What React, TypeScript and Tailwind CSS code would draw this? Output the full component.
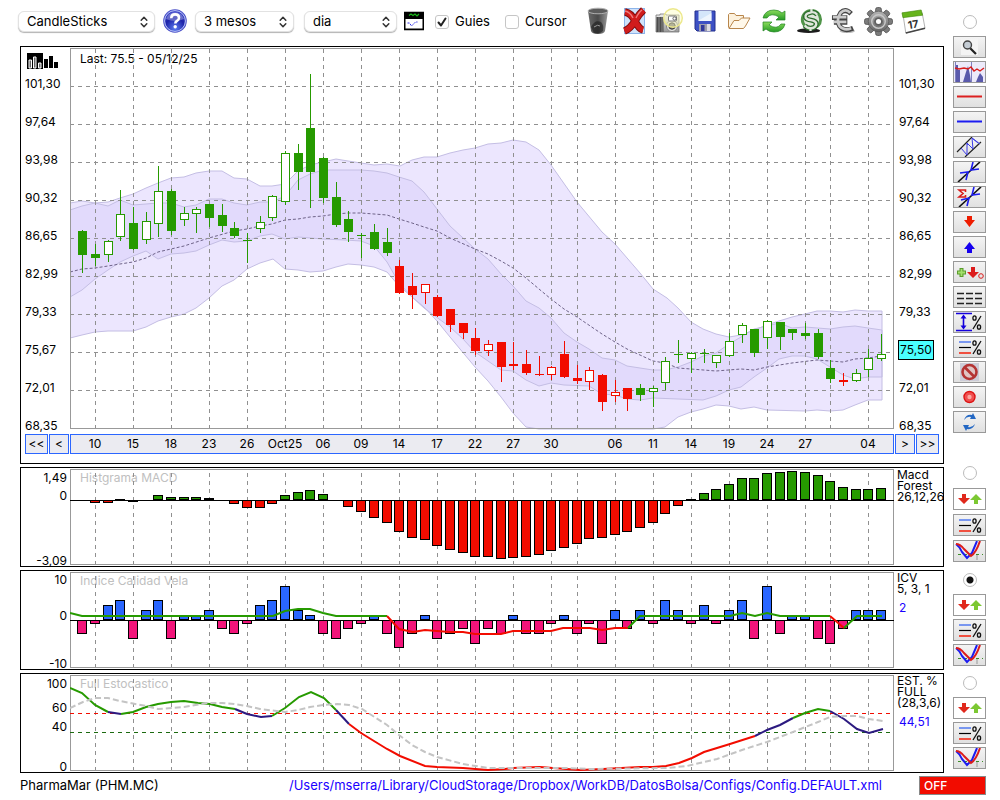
import {ReactNode, useState} from "react";

const GREEN = "#269a00";
const RED = "#f20c00";
const PURPLE = "#2c1a80";

// x of the bar number k
const barX = (k: number) => Math.floor(70 + k * 12.68);

const guides = [2, 5, 8, 11, 14, 17, 20, 23, 26, 29, 32, 35, 38, 40, 43, 46, 49, 52, 55, 58, 60, 63];

const dates: [number, string][] = [
  [2, "10"], [5, "15"], [8, "18"], [11, "23"], [14, "26"], [17, "Oct25"], [20, "06"], [23, "09"], [26, "14"], [29, "17"],
  [32, "22"], [35, "27"], [38, "30"], [43, "06"], [46, "11"], [49, "14"], [52, "19"], [55, "24"], [58, "27"], [63, "04"],
];

const prices = ["101,30", "97,64", "93,98", "90,32", "86,65", "82,99", "79,33", "75,67", "72,01", "68,35"];

// wick top, body top, body bottom, wick bottom, kind: g/r filled, G/R hollow
const candles: [number, number, number, number, string][] = [
  [230, 231, 255, 273, "g"], [244, 254, 258, 266, "g"], [240, 241, 255, 262, "G"], [190, 214, 237, 241, "G"],
  [207, 223, 249, 250, "g"], [212, 221, 240, 244, "G"], [166, 191, 224, 237, "G"], [189, 191, 231, 235, "g"],
  [207, 213, 220, 226, "G"], [207, 209, 214, 233, "G"], [204, 204, 218, 227, "g"], [204, 215, 226, 232, "g"],
  [222, 228, 236, 238, "g"], [233, 240, 241, 263, "g"], [216, 222, 229, 233, "G"], [195, 196, 218, 221, "G"],
  [151, 153, 202, 205, "G"], [144, 153, 172, 190, "g"], [74, 128, 172, 208, "g"], [157, 158, 198, 203, "g"],
  [182, 197, 225, 227, "g"], [211, 219, 232, 242, "g"], [233, 235, 236, 258, "g"], [224, 232, 249, 250, "g"],
  [228, 242, 253, 256, "g"], [260, 266, 293, 294, "r"], [273, 286, 295, 309, "r"], [284, 284, 293, 304, "R"],
  [295, 297, 316, 317, "r"], [309, 309, 325, 332, "r"], [323, 323, 333, 339, "r"], [328, 338, 351, 355, "r"],
  [340, 344, 351, 356, "R"], [342, 342, 367, 382, "r"], [342, 364, 366, 370, "r"], [350, 364, 373, 375, "r"],
  [356, 374, 375, 376, "r"], [366, 367, 375, 380, "R"], [341, 354, 377, 378, "r"], [365, 378, 381, 384, "r"],
  [367, 370, 382, 390, "R"], [374, 375, 402, 411, "r"], [380, 392, 396, 402, "R"], [388, 388, 399, 411, "r"],
  [384, 388, 395, 401, "g"], [386, 388, 392, 407, "G"], [357, 361, 383, 390, "G"], [340, 354, 355, 363, "g"],
  [352, 353, 359, 373, "G"], [349, 353, 354, 363, "g"], [355, 355, 363, 368, "G"], [333, 341, 356, 357, "G"],
  [323, 325, 335, 343, "G"], [329, 329, 353, 357, "g"], [320, 321, 338, 349, "G"], [322, 322, 337, 350, "g"],
  [329, 329, 333, 340, "g"], [323, 333, 336, 339, "g"], [329, 333, 357, 359, "g"], [360, 368, 379, 383, "g"],
  [373, 380, 382, 386, "r"], [369, 373, 381, 382, "G"], [349, 358, 370, 377, "G"], [334, 354, 359, 361, "G"],
];

const longUpper = "70,210 82,206 95,203 108,202 120,198 133,194 146,188 158,183 171,178 184,177 196,173 209,171 222,171 234,178 247,179 260,186 272,186 285,184 298,171 310,165 323,162 336,159 348,161 361,163 374,165 387,164 400,166 412,160 424,157 437,157 450,153 463,150 475,148 488,144 501,143 513,140 526,142 539,150 551,165 577,202 602,232 615,244 640,273 653,289 667,298 678,308 691,322 703,329 716,334 729,337 741,335 754,330 767,325 779,321 792,317 805,314 817,311 830,311 843,312 855,310 868,311 882,311";
const longLower = "70,338 82,335 95,332 108,331 120,331 133,331 146,327 158,321 171,317 184,314 196,308 209,298 222,286 234,280 247,269 260,263 273,259 285,269 298,270 310,272 323,271 336,267 348,264 361,265 374,267 387,272 399,286 424,307 437,321 450,337 475,367 488,381 501,397 513,413 526,427 539,429 653,429 665,427 678,417 691,412 703,409 716,405 729,406 741,409 754,407 767,410 805,411 817,410 830,411 843,410 855,405 868,400 882,400";
const shortUpper = "70,203 82,201 95,203 108,206 120,200 133,205 146,204 158,203 171,203 184,207 196,205 209,199 222,199 234,203 247,205 260,202 272,202 285,196 298,180 310,174 323,170 336,170 361,170 374,171 387,173 399,177 412,181 424,192 450,226 475,249 488,259 501,274 513,286 526,301 539,308 551,318 564,333 577,342 589,349 602,358 615,360 627,366 640,368 653,370 665,370 678,367 691,362 703,356 716,353 729,344 741,337 754,329 767,326 779,323 792,328 805,327 830,329 843,327 855,326 868,328 882,330";
const shortLower = "70,297 82,290 95,279 108,270 120,262 133,256 146,251 158,259 171,254 184,253 196,251 209,245 222,240 234,242 247,241 260,236 272,234 285,239 298,237 323,239 345,240 361,241 374,246 387,262 399,283 412,297 424,308 450,327 463,339 475,352 501,370 513,371 526,380 539,386 551,383 564,385 589,386 602,394 615,395 627,399 640,400 653,398 678,399 703,400 716,396 729,390 741,387 754,377 767,368 779,359 792,356 805,356 817,359 830,367 843,375 855,379 868,377 882,377";
const average = "70,272 82,269 95,268 108,266 120,264 133,262 146,258 158,252 171,249 184,246 209,238 234,231 247,229 260,226 272,224 285,220 298,219 310,217 323,216 336,214 348,213 361,213 374,214 387,215 399,219 412,223 424,227 437,231 450,238 475,249 488,254 501,261 513,268 526,278 539,289 551,299 564,309 577,317 602,334 615,342 627,349 640,355 653,361 665,363 678,368 691,369 716,371 741,369 754,370 767,367 792,363 817,360 843,362 855,359 868,358 881,356";

const band = (upper: string, lower: string) => upper + " " + lower.split(" ").reverse().join(" ");

// end of each bar, 500 is the zero line and 0 means no bar
const macd = [
  0, 503, 503, 499, 502, 0, 495, 497, 497, 497, 498, 0, 504, 508, 508, 504, 495, 492, 490, 494, 0, 507, 512, 518, 523, 532, 538, 540, 546, 550, 553, 557,
  557, 559, 558, 557, 555, 551, 548, 544, 539, 538, 535, 532, 528, 523, 514, 506, 499, 493, 489, 484, 478, 478, 473, 472, 471, 472, 475, 481, 487, 489, 489, 488,
];

// same, the zero line is 620
const icv = [
  634, 624, 605, 600, 639, 610, 600, 639, 615, 615, 610, 629, 634, 624, 605, 600, 586, 610, 615, 634, 639, 629, 624, 615, 634, 648, 634, 615, 639, 634, 629, 644,
  629, 634, 615, 634, 634, 624, 615, 634, 624, 644, 610, 629, 610, 624, 600, 610, 624, 605, 624, 610, 600, 639, 586, 634, 615, 615, 639, 644, 629, 610, 610, 610,
];

const icvLine: [string, string][] = [
  [GREEN, "70,613 82,616 273,616 285,611 298,609 310,609 323,613 336,616 387,616"],
  [RED, "387,616 399,629 413,632 425,630 437,631 450,632 463,632 475,634 501,634 513,631 551,631 563,628 590,628 602,630 615,628 628,628"],
  [GREEN, "628,628 640,616 730,616 742,613 755,616 767,613 780,616 830,616"],
  [RED, "830,616 844,628"],
  [GREEN, "844,628 857,616 882,616"],
];

const stochastic: [string, string][] = [
  [GREEN, "70,688 82,693 95,705 108,712"],
  [PURPLE, "108,712 121,714"],
  [GREEN, "121,714 133,712 146,707 158,704 171,702 184,701 198,703 210,704 222,707 235,709"],
  [PURPLE, "235,709 247,714 261,717 272,716"],
  [GREEN, "272,716 285,708 299,697 311,692 324,698 336,710"],
  [PURPLE, "336,710 349,724"],
  [RED, "349,724 361,733 387,749 400,756 425,766 437,767 463,768 488,770 505,769 513,768 540,767 553,768 580,770 603,769 640,767 653,767 666,766 679,763 692,758 704,752 730,744 755,736"],
  [PURPLE, "755,736 767,730 780,725 793,718"],
  [GREEN, "793,718 805,713 818,709 830,711"],
  [PURPLE, "830,711 844,719 857,729 869,733 883,729"],
];
const stochasticSlow = "70,708 83,702 95,698 108,698 120,701 146,706 158,709 184,707 207,703 222,703 234,704 247,706 260,709 285,712 298,710 310,707 323,705 337,704 349,705 362,709 387,725 399,735 412,745 425,752 437,757 463,764 488,768 505,768 567,768 590,769 667,768 687,766 717,759 742,750 767,742 793,732 818,722 830,717 844,716 857,716 869,719 883,721";

const Guides = ({top, bottom}: {top: number; bottom: number}) => (
  <g stroke="#909090" strokeDasharray="4 4" shapeRendering="crispEdges">
    {guides.map((k) => (
      <line key={k} x1={barX(k) + 0.5} x2={barX(k) + 0.5} y1={top} y2={bottom} />
    ))}
  </g>
);

const Bars = ({values, zero, up, down}: {values: number[]; zero: number; up: string; down: string}) => (
  <g stroke="#000" shapeRendering="crispEdges">
    {values.map((v, i) =>
      v === 0 ? null : (
        <rect
          key={i}
          x={barX(i + 1) - 4.5}
          y={Math.min(v, zero) + 0.5}
          width={9}
          height={Math.max(Math.abs(v - zero) - 1, 1)}
          fill={v < zero ? up : down}
        />
      ),
    )}
    <line x1={70} x2={894} y1={zero + 0.5} y2={zero + 0.5} />
  </g>
);

const Frame = ({top, height}: {top: number; height: number}) => (
  <rect x={70.5} y={top + 0.5} width={823} height={height - 1} fill="none" stroke="#999" shapeRendering="crispEdges" />
);

const PriceChart = () => (
  <svg viewBox="70 48 824 382" preserveAspectRatio="none" className="relative block h-[382px] w-full">
    <clipPath id="long-band">
      <polygon points={band(longUpper, longLower)} />
    </clipPath>
    <polygon points={band(longUpper, longLower)} fill="#ece6fe" />
    <polygon points={band(shortUpper, shortLower)} fill="#ece6fe" />
    <polygon points={band(shortUpper, shortLower)} fill="#e2dafc" clipPath="url(#long-band)" />
    <g fill="none" stroke="#c4bee4">
      <polygon points={band(longUpper, longLower)} />
      <polygon points={band(shortUpper, shortLower)} />
    </g>
    <polyline points={average} fill="none" stroke="#6e6388" strokeDasharray="3 2" />
    <Guides top={49} bottom={430} />
    <g stroke="#909090" strokeDasharray="4 4" shapeRendering="crispEdges">
      {[86, 124, 162, 200, 238, 276, 314, 352, 390].map((y) => (
        <line key={y} x1={70} x2={895} y1={y + 0.5} y2={y + 0.5} />
      ))}
    </g>
    <Frame top={48} height={381} />
    <g shapeRendering="crispEdges">
      {candles.map(([high, top, bottom, low, kind], i) => {
        const x = barX(i + 1);
        const color = kind.toLowerCase() === "g" ? GREEN : RED;
        const hollow = kind === "G" || kind === "R";
        return (
          <g key={i}>
            <rect x={x} y={high} width={1} height={low - high} fill={color} />
            <rect x={x - 4} y={top} width={9} height={bottom - top} fill={color} />
            {hollow && <rect x={x - 3} y={top + 1} width={7} height={bottom - top - 2} fill="#fff" />}
          </g>
        );
      })}
    </g>
  </svg>
);

const MacdChart = () => (
  <svg viewBox="70 469 824 97" preserveAspectRatio="none" className="relative block h-[97px] w-full">
    <Guides top={473} bottom={566} />
    <Frame top={469} height={96} />
    <Bars values={macd} zero={500} up={GREEN} down={RED} />
  </svg>
);

const IcvChart = () => (
  <svg viewBox="70 572 824 97" preserveAspectRatio="none" className="relative block h-[97px] w-full">
    <Guides top={576} bottom={669} />
    <Frame top={572} height={96} />
    <Bars values={icv} zero={620} up="#2a66ff" down="#f2147a" />
    {icvLine.map(([color, points], i) => (
      <polyline key={i} points={points} fill="none" stroke={color} strokeWidth={2} />
    ))}
  </svg>
);

const StochasticChart = () => (
  <svg viewBox="70 675 824 97" preserveAspectRatio="none" className="relative block h-[97px] w-full">
    <Guides top={679} bottom={772} />
    <Frame top={675} height={96} />
    <g strokeDasharray="4 4" shapeRendering="crispEdges">
      <line x1={70} x2={895} y1={713.5} y2={713.5} stroke="#f20c00" />
      <line x1={70} x2={895} y1={732.5} y2={732.5} stroke="#1c6a10" />
    </g>
    {stochastic.map(([color, points], i) => (
      <polyline key={i} points={points} fill="none" stroke={color} strokeWidth={2} />
    ))}
    <polyline points={stochasticSlow} fill="none" stroke="#c4c4c4" strokeWidth={2} strokeDasharray="6 3" />
  </svg>
);

interface IPanelProps {
  title: string;
  levels: ReactNode;
  names: string[];
  value?: string;
  children: ReactNode;
}

const IndicatorPanel = ({title, levels, names, value, children}: IPanelProps) => (
  <section className="flex h-[100px] overflow-hidden border border-black pt-px">
    <div className="flex h-[100px] w-[49px] shrink-0 flex-col pr-[3px] text-right leading-4">{levels}</div>
    <div className="relative min-w-0 flex-1">
      <h2 className="absolute top-0 left-[10px] leading-[18px] text-[#c0c0c0]">{title}</h2>
      {children}
    </div>
    <div className="w-[49px] shrink-0 pl-[3px] leading-[11px] whitespace-nowrap">
      {names.map((name) => (
        <div key={name}>{name}</div>
      ))}
      {value && <div className="mt-[6px] pl-[2px] leading-4 text-[#1a00ff]">{value}</div>}
    </div>
  </section>
);

interface IDropDownProps {
  label: string;
  options: string[];
  className: string;
}

const DropDown = ({label, options, className}: IDropDownProps) => (
  <div className={"relative h-[21px] shrink-0 rounded-md border border-[#e2e2e2] bg-white shadow-[0_1px_1px_rgba(0,0,0,0.3)] " + className}>
    <select aria-label={label} className="block h-full w-full appearance-none bg-transparent pl-2 text-[13px] leading-4 outline-none">
      {options.map((o) => (
        <option key={o}>{o}</option>
      ))}
    </select>
    <svg viewBox="0 0 8 12" className="pointer-events-none absolute top-1 right-[6px] h-3 w-2" fill="none" stroke="#333" strokeWidth="1.5" strokeLinecap="round" strokeLinejoin="round">
      <path d="M1.2 4.2 4 1.2l2.8 3M1.2 7.8 4 10.8l2.8-3" />
    </svg>
  </div>
);

interface ICheckProps {
  id: string;
  label: string;
  checked: boolean;
  onChange: (v: boolean) => void;
}

const CheckBox = ({id, label, checked, onChange}: ICheckProps) => (
  <div className="flex items-center">
    <span className="relative h-[14px] w-[14px]">
      <input id={id} type="checkbox" checked={checked} onChange={(e) => onChange(e.target.checked)} className="block h-[14px] w-[14px] appearance-none rounded-[3px] border border-[#c6c6c6] bg-white" />
      {checked && (
        <svg viewBox="0 0 14 14" className="pointer-events-none absolute inset-0" fill="none" stroke="#222" strokeWidth="2" strokeLinecap="round" strokeLinejoin="round">
          <path d="M3.5 7.5 6 10.5 10.5 3.5" />
        </svg>
      )}
    </span>
    <label htmlFor={id} className="pl-[6px] text-[13px]">
      {label}
    </label>
  </div>
);

const IconButton = ({label, className, children}: {label: string; className: string; children: ReactNode}) => (
  <button type="button" aria-label={label} className={"shrink-0 " + className}>
    {children}
  </button>
);

const HelpIcon = () => (
  <svg viewBox="0 0 24 26">
    <defs>
      <radialGradient id="help" cx="50%" cy="85%" r="80%">
        <stop offset="0" stopColor="#5c7cf0" />
        <stop offset="0.6" stopColor="#1c22a8" />
        <stop offset="1" stopColor="#3c44c8" />
      </radialGradient>
    </defs>
    <circle cx="12" cy="13" r="11.8" fill="#4a50c8" />
    <circle cx="12" cy="13" r="10.4" fill="url(#help)" stroke="#b8c4f8" />
    <path d="M3 11a9.2 8.5 0 0 1 18 0q-9 4-18 0z" fill="#fff" opacity="0.3" />
    <path d="M8.3 10.2q0-3.8 3.8-3.8 3.9 0 3.9 3.3 0 2-2 3.2-1.7 1-1.7 2.6" fill="none" stroke="#fff" strokeWidth="2.6" />
    <circle cx="12.2" cy="18.8" r="1.7" fill="#fff" />
  </svg>
);

const PlanIcon = () => (
  <svg viewBox="0 0 20 20">
    <rect width="20" height="20" fill="#bbb" />
    <rect y="1" width="20" height="18" fill="#000" />
    <rect x="1.5" y="8" width="17" height="9.5" fill="#fff" />
    <path d="M5 4.5 7 3l2 1.5L11 3l2 2 2-2" fill="none" stroke="#18b818" strokeWidth="1.2" />
    <path d="M3.5 12h2l2 3 4-4h2" fill="none" stroke="#3030e8" strokeDasharray="2 1" />
  </svg>
);

const TrashIcon = () => (
  <svg viewBox="0 0 22 28">
    <defs>
      <linearGradient id="bin">
        <stop offset="0" stopColor="#6a6a6a" />
        <stop offset="0.5" stopColor="#4a4a4a" />
        <stop offset="1" stopColor="#9a9a9a" />
      </linearGradient>
    </defs>
    <path d="M1 4 4 24q1 3 7 3t7-3l3-20z" fill="url(#bin)" />
    <path d="M4 20q4-8 10-5 3 3 2 9-3 3-9 2z" fill="#1c1c1c" opacity="0.6" />
    <path d="M7 20q4-3 6-1" fill="none" stroke="#999" />
    <ellipse cx="11" cy="4" rx="10" ry="2.8" fill="#5c5c5c" stroke="#b0b0b0" />
  </svg>
);

const DeleteIcon = () => (
  <svg viewBox="0 0 26 28" fill="none">
    <rect x="3.5" y="1.5" width="20" height="25" fill="#cfe2fa" stroke="#8cb4ea" />
    <path d="M4 5q6 1 10 9 4 8 8 9M22.500 3Q18 7 14 14 9 22 3.500 24" stroke="#7c0c0c" strokeWidth="7.4" />
    <path d="M4 5q6 1 10 9 4 8 8 9M22.500 3Q18 7 14 14 9 22 3.500 24" stroke="#d01c1c" strokeWidth="5.6" />
    <path d="M4 4q5 1 8 7M21 3q-3 2-6 8" stroke="#f07c7c" strokeWidth="1.4" />
  </svg>
);

const CameraIcon = () => (
  <svg viewBox="0 0 28 28">
    <defs>
      <linearGradient id="cam" x2="0" y2="1">
        <stop offset="0" stopColor="#eee" />
        <stop offset="1" stopColor="#999" />
      </linearGradient>
    </defs>
    <path d="M1 8h4v-1h6v1h13v17H1z" fill="url(#cam)" stroke="#777" strokeWidth="0.8" />
    <rect x="1.5" y="10" width="7" height="15" fill="#4c4c4c" />
    <path d="M4 10v15M7 10v15" stroke="#888" />
    <circle cx="17" cy="19" r="5.6" fill="#ddd" stroke="#888" />
    <circle cx="17" cy="19" r="3.2" fill="#777" stroke="#333" />
    <circle cx="18" cy="11" r="9.3" fill="#fdfcc0" fillOpacity="0.45" stroke="#ece88c" strokeWidth="1.4" />
    <rect x="13.5" y="9" width="8" height="5" rx="1" fill="#fff" stroke="#777" />
    <circle cx="19.5" cy="11.5" r="1.6" fill="#fff" stroke="#666" />
  </svg>
);

const SaveIcon = () => (
  <svg viewBox="0 0 22 22">
    <path d="M1 1h20v20H3l-2-2z" fill="#3c50c4" stroke="#232f8c" />
    <rect x="4.5" y="1" width="13" height="10" fill="#d4e6fa" />
    <path d="M4.5 10.5 17.5 3v8h-13z" fill="#fff" opacity="0.6" />
    <rect x="5" y="14" width="12" height="7" fill="#9c9cac" />
    <rect x="7" y="15" width="3.5" height="6" fill="#30389c" />
    <rect x="13" y="14" width="3" height="7" fill="#dcdce4" />
  </svg>
);

const FolderIcon = () => (
  <svg viewBox="0 0 24 18" fill="#fdf2de" stroke="#b8864c" strokeLinejoin="round">
    <path d="M1.5 15V2.5l1-1h5l1.5 2h7.5V6l-14 10.500z" />
    <path d="m2 16.500 5-8h5l2.500-2.500H23L18.500 14l-2 2.500z" fill="#fff8ea" />
  </svg>
);

const RefreshIcon = () => (
  <svg viewBox="0 0 24 24">
    <defs>
      <linearGradient id="leaf" x2="0" y2="1">
        <stop offset="0" stopColor="#8cdc5c" />
        <stop offset="1" stopColor="#259a25" />
      </linearGradient>
    </defs>
    <g fill="url(#leaf)" stroke="#238423" strokeWidth="0.7">
      <path d="M1 9Q3 1 12 1q5 0 8 3l3-2v9h-9l3-3Q9 3 5 9z" />
      <path d="M23 15q-2 8-11 8-5 0-8-3l-3 2v-9h9l-3 3q8 5 12-1z" />
    </g>
  </svg>
);

const DollarIcon = () => (
  <svg viewBox="0 0 27 27" fill="none">
    <ellipse cx="12" cy="23.500" rx="12" ry="2.500" fill="#1c1c1c" />
    <circle cx="15" cy="12" r="9.500" fill="#dfe6da" stroke="#4f9448" strokeWidth="3" />
    <path d="M21 7q-3-4-8-2-5 1-4 5 1 2 5.500 2.500 6 1 5.500 4.500-1 4-6 4-4 0-6-3" stroke="#2c6c2c" strokeWidth="5" />
    <path d="M21 7q-3-4-8-2-5 1-4 5 1 2 5.500 2.500 6 1 5.500 4.500-1 4-6 4-4 0-6-3M15 1v4M14 20v4" stroke="#e0e6dc" strokeWidth="2.400" />
  </svg>
);

const EuroIcon = () => (
  <svg viewBox="0 0 26 27" fill="none">
    <ellipse cx="17" cy="24" rx="8" ry="2" fill="#bbb" />
    <path d="M21 6Q15 0 10 5 5 12 9 19q5 6 14 2M1 10h16M3 15h14" stroke="#444" strokeWidth="5" />
    <path d="M20 5Q15 0 10 5 5 12 9 19q5 5 12 2M2 9.500h14M3 14.500h13" stroke="#cacaca" strokeWidth="2.800" />
  </svg>
);

const GearIcon = () => (
  <svg viewBox="0 0 30 30">
    <defs>
      <linearGradient id="gear" x2="0" y2="1">
        <stop offset="0" stopColor="#b4b4b4" />
        <stop offset="1" stopColor="#646464" />
      </linearGradient>
    </defs>
    <g fill="#7c7c7c" stroke="#4c4c4c" strokeWidth="0.8">
      {[0, 45, 90, 135].map((a) => (
        <rect key={a} x="12" y="0.5" width="6" height="29" rx="2" transform={`rotate(${a} 15 15)`} />
      ))}
    </g>
    <circle cx="15" cy="15" r="10.6" fill="url(#gear)" stroke="#505050" strokeWidth="0.6" />
    <circle cx="15" cy="15" r="7" fill="none" stroke="#c8c8c8" strokeWidth="1.5" />
    <circle cx="15" cy="15" r="4.5" fill="#606060" />
    <circle cx="15" cy="15" r="2.6" fill="#fff" />
  </svg>
);

const CalendarIcon = () => (
  <svg viewBox="0 0 26 26">
    <path d="M2 5 22 4l3 16-20 5z" fill="#fff" stroke="#b0b0b0" />
    <path d="m5 25 20-5" stroke="#444" strokeWidth="1.5" />
    <path d="M1 4 21 1l1.500 5.500L2 9z" fill="#66b41c" stroke="#3f8408" strokeWidth="0.6" />
    <text x="7" y="20" fontSize="11" fontWeight="700" fill="#333" transform="rotate(-9 13 16)">17</text>
  </svg>
);

const Percent = () => (
  <g fill="none" stroke="#111" strokeWidth="1.3">
    <path d="m19 17 8-13" />
    <ellipse cx="20.5" cy="6" rx="1.6" ry="2.2" />
    <ellipse cx="25" cy="15" rx="1.6" ry="2.2" />
  </g>
);

const icons: Record<string, ReactNode> = {
  zoom: (
    <>
      <rect x="7" y="2" width="17" height="16" fill="#f4f4f4" />
      <path d="m16 11 6 6" stroke="#222" strokeWidth="2.2" />
      <circle cx="13.5" cy="8" r="4" fill="#c4ccd4" stroke="#444" strokeWidth="1.4" />
    </>
  ),
  volume: (
    <>
      <rect width="31" height="20" fill="#eceafa" />
      <path d="M2 20V3h2v5h2v12zM9 20l3-10 2-6 2 9 1 7zM22 20l2-5 2-4 3 4v5z" fill="#5a5aac" />
      <path d="M1.5 0v20M17.5 0v20" stroke="#8080c0" />
      <path d="m1 6 4 1 5-1 4 1 3-2 3 4 3-2 3 2 4-3" fill="none" stroke="#d81c1c" strokeWidth="1.4" />
    </>
  ),
  redLine: <path d="M3 9.5h25" stroke="#dc2020" strokeWidth="2" />,
  blueLine: <path d="M3 9.5h25" stroke="#1c1cf0" strokeWidth="2" />,
  channel: (
    <g fill="none">
      <path d="M3 15 18 0M11 20 27 5" stroke="#222" strokeWidth="1.2" />
      <path d="m7 11 6 7 0-12 6 6-1-11 8 6M13 6l1 2M18 1l6 5" stroke="#3a3ae8" />
    </g>
  ),
  cross: (
    <g fill="none" strokeWidth="1.6">
      <path d="M4 20 26 0" stroke="#111" />
      <path d="m6 11 8-1-2 8M19 0l-2 8 8-1" stroke="#1c1cf0" />
    </g>
  ),
  sumCross: (
    <g fill="none" strokeWidth="1.6">
      <path d="M5 20 27 0" stroke="#111" />
      <path d="m7 13 8-2-2 8M20 0l-2 8 8-1" stroke="#1c1cf0" />
      <path d="M11.500 5V3H5l4 3.500L5 10h6.500V8" stroke="#d81c1c" />
    </g>
  ),
  down: <path d="M13 4h5v4h3l-5.500 7L10 8h3z" fill="#ee1c00" />,
  up: <path d="M13 16h5v-4h3l-5.500-7L10 12h3z" fill="#1600ee" />,
  marks: (
    <>
      <path d="M3 10.5h9M7.500 6v9" stroke="#5a9c2c" strokeWidth="4" />
      <path d="M4 10.5h7M7.500 7v7" stroke="#a4e06c" strokeWidth="1.8" />
      <path d="M17 5h4v5h4l-6 6-6-6h4z" fill="#dc1c1c" />
      <circle cx="27" cy="14" r="2.3" fill="none" stroke="#dc1c1c" />
    </>
  ),
  dashes: <path d="M3 6.5h25M3 11.5h25M3 16.5h25" stroke="#222" strokeWidth="1.6" strokeDasharray="7 2" />,
  range: (
    <>
      <path d="M2 1.500h16M2 18.500h16M9.500 4v12" stroke="#1400dc" strokeWidth="1.6" />
      <path d="m6.500 6.500 3-4 3 4zM6.500 13.500l3 4 3-4z" fill="#1400dc" />
      <Percent />
    </>
  ),
  levels: (
    <>
      <path d="M5 5h12" stroke="#2a5cf0" strokeWidth="1.2" />
      <path d="M5 10.5h12" stroke="#000" strokeWidth="1.2" />
      <path d="M5 16h12" stroke="#f05040" strokeWidth="2" />
      <Percent />
    </>
  ),
  forbid: (
    <>
      <rect x="6" y="1" width="19" height="18" fill="#cdcdd8" />
      <circle cx="15.5" cy="10" r="7" fill="#e0c4c4" stroke="#b43434" strokeWidth="2.6" />
      <path d="m10.5 5 10 10" stroke="#b43434" strokeWidth="2.6" />
    </>
  ),
  record: (
    <>
      <circle cx="15.5" cy="10" r="5.5" fill="#f05050" stroke="#dc1414" strokeWidth="1.4" />
      <circle cx="15.5" cy="10" r="2.2" fill="#fca8a0" />
    </>
  ),
  sync: (
    <g fill="#2468c4">
      <path d="M10 8q2-6 8-5l1-2 3 6h-6l1-2q-4-1-7 3z" />
      <path d="M21 12q-2 6-8 5l-1 2-3-6h6l-1 2q4 1 7-3z" />
    </g>
  ),
  buySell: (
    <>
      <path d="M8 5h4v4h4l-6 6-6-6h4z" fill="#e0281c" />
      <path d="M20 15h4v-4h4l-6-6-6 6h4z" fill="#7cc832" />
    </>
  ),
  curves: (
    <g fill="none">
      <path d="M4 13.5h25" stroke="#3c8c28" strokeDasharray="3 3" />
      <path d="M23 14v5" stroke="#999" />
      <path d="M2 3q4 3 6 8l5 6 5-5 5-12" stroke="#1c1cf0" strokeWidth="2" />
      <path d="M2 3q4 0 8 5l7 7q5-3 9-15" stroke="#dc1c1c" strokeWidth="2" />
    </g>
  ),
};

const ToolButton = ({name, plain}: {name: string; plain?: boolean}) => (
  <button
    type="button"
    aria-label={name}
    className={"h-[22px] w-[33px] shrink-0 border border-[#999] " + (plain ? "bg-white" : "bg-linear-to-b from-[#f4f4f4] to-[#e0e0e0]")}
  >
    <svg viewBox="0 0 31 20" className="block h-5 w-[31px]">
      {icons[name]}
    </svg>
  </button>
);

interface IRadioProps {
  value: number;
  selected: number;
  onSelect: (v: number) => void;
}

const PanelRadio = ({value, selected, onSelect}: IRadioProps) => (
  <input
    type="radio"
    name="panel"
    aria-label={"Panel " + value}
    checked={selected === value}
    onChange={() => onSelect(value)}
    className="mb-1 block h-[14px] w-[14px] shrink-0 appearance-none rounded-full border border-[#bbb] bg-white checked:bg-[radial-gradient(circle,#111_0_3px,#fff_4px)]"
  />
);

const tools = ["zoom", "volume", "redLine", "blueLine", "channel", "cross", "sumCross", "down", "up", "marks", "dashes", "range", "levels", "forbid", "record", "sync"];

const NavButton = ({children, className}: {children: ReactNode; className: string}) => (
  <button type="button" className={"h-5 shrink-0 border border-[#2b66ff] bg-[#ebebf1] leading-4 " + className}>
    {children}
  </button>
);

const App = () => {
  const [showGuides, setShowGuides] = useState(true);
  const [showCursor, setShowCursor] = useState(false);
  const [panel, setPanel] = useState(2);

  return (
    <div className="bg-white font-[Inter,'Liberation_Sans',sans-serif] text-xs text-black">
      <div className="flex gap-[9px] pr-[14px]">
        <div className="min-w-0 flex-1">
          {/* toolbar */}
          <header className="flex h-[46px] items-center pb-1 pl-[18px]">
            <DropDown label="Chart" options={["CandleSticks"]} className="w-[137px]" />
            <IconButton label="Help" className="mx-2 w-6">
              <HelpIcon />
            </IconButton>
            <DropDown label="Period" options={["3 mesos"]} className="w-[99px]" />
            <DropDown label="Interval" options={["dia"]} className="ml-[10px] w-[93px]" />
            <IconButton label="Plan" className="ml-[7px] w-5">
              <PlanIcon />
            </IconButton>
            <div className="ml-[11px] flex gap-[15px] pt-[2px]">
              <CheckBox id="guides" label="Guies" checked={showGuides} onChange={setShowGuides} />
              <CheckBox id="cursor" label="Cursor" checked={showCursor} onChange={setShowCursor} />
            </div>
            <div className="ml-auto flex items-center gap-2 pr-[18px]">
              <IconButton label="Trash" className="mr-1 w-[22px]">
                <TrashIcon />
              </IconButton>
              <IconButton label="Delete" className="w-[26px]">
                <DeleteIcon />
              </IconButton>
              <IconButton label="Snapshot" className="mr-[3px] w-7">
                <CameraIcon />
              </IconButton>
              <IconButton label="Save" className="mr-[3px] w-[22px]">
                <SaveIcon />
              </IconButton>
              <IconButton label="Open" className="mr-[3px] w-6">
                <FolderIcon />
              </IconButton>
              <IconButton label="Refresh" className="mr-[3px] w-6">
                <RefreshIcon />
              </IconButton>
              <IconButton label="Dollar" className="w-[26px]">
                <DollarIcon />
              </IconButton>
              <IconButton label="Euro" className="w-[25px]">
                <EuroIcon />
              </IconButton>
              <IconButton label="Settings" className="w-[29px]">
                <GearIcon />
              </IconButton>
              <IconButton label="Calendar" className="w-[25px]">
                <CalendarIcon />
              </IconButton>
            </div>
          </header>

          <main className="flex flex-col gap-[3px] pl-5">
            <section className="h-[418px] border border-black pt-px">
              <div className="flex h-[382px]">
                <div className="flex w-[49px] shrink-0 flex-col pt-[5px] pl-1">
                  <svg viewBox="0 0 32 16" className="mb-[5px] ml-[2px] block h-4 w-8 shrink-0">
                    <rect width="16" height="16" />
                    <path d="M2 7h2.500v8H2zM6.500 4H9v11H6.500zM11.500 10H14v5h-2.500z" fill="#666" stroke="#fff" />
                    <path d="M17 6h4v9h-4zM22 3h4v12h-4zM27 9h4v6h-4z" />
                  </svg>
                  <div className="flex flex-col gap-[18px]">
                    {prices.map((p) => (
                      <div key={p} className="h-5 leading-5">
                        {p}
                      </div>
                    ))}
                  </div>
                </div>
                <div className="relative min-w-0 flex-1">
                  <h1 className="absolute top-[2px] left-[10px] leading-[18px]">Last: 75.5 - 05/12/25</h1>
                  <PriceChart />
                </div>
                <div className="flex w-[49px] shrink-0 flex-col gap-[18px] pt-[26px] pl-1">
                  {prices.map((p) =>
                    p === "75,67" ? (
                      <div key={p} className="h-5 w-9 border border-black bg-[#4affff] text-center leading-[18px]">
                        75,50
                      </div>
                    ) : (
                      <div key={p} className="h-5 pl-px leading-5">
                        {p}
                      </div>
                    ),
                  )}
                </div>
              </div>
              <nav className="mt-1 flex gap-px px-1">
                <NavButton className="w-[23px]">&lt;&lt;</NavButton>
                <NavButton className="w-5">&lt;</NavButton>
                <div className="relative h-5 min-w-0 flex-1 border border-[#2b66ff] bg-[#ebebf1]">
                  {dates.map(([k, label]) => (
                    <span key={k} className="absolute -translate-x-1/2 leading-[18px]" style={{left: `${((barX(k) - 71) / 822) * 100}%`}}>
                      {label}
                    </span>
                  ))}
                </div>
                <NavButton className="w-5">&gt;</NavButton>
                <NavButton className="w-[23px]">&gt;&gt;</NavButton>
              </nav>
            </section>

            <IndicatorPanel
              title="Histgrama MACD"
              names={["Macd", "Forest", "26,12,26"]}
              levels={
                <>
                  <div className="mt-px">1,49</div>
                  <div className="mt-[2px]">0</div>
                  <div className="mt-auto">-3,09</div>
                </>
              }
            >
              <MacdChart />
            </IndicatorPanel>
            <IndicatorPanel
              title="Indice Calidad Vela"
              names={["ICV", "5, 3, 1"]}
              value="2"
              levels={
                <>
                  <div>10</div>
                  <div className="mt-5">0</div>
                  <div className="mt-auto">-10</div>
                </>
              }
            >
              <IcvChart />
            </IndicatorPanel>
            <IndicatorPanel
              title="Full Estocastico"
              names={["EST. %", "FULL", "(28,3,6)"]}
              value="44,51"
              levels={
                <>
                  <div className="mt-px">100</div>
                  <div className="mt-2">60</div>
                  <div className="mt-[3px]">40</div>
                  <div className="mt-auto">0</div>
                </>
              }
            >
              <StochasticChart />
            </IndicatorPanel>
          </main>
        </div>

        {/* side tools, one group for each panel */}
        <aside className="flex w-[33px] shrink-0 flex-col pt-[15px]">
          <div className="flex h-[451px] flex-col items-center gap-[3px]">
            <PanelRadio value={0} selected={panel} onSelect={setPanel} />
            {tools.map((t) => (
              <ToolButton key={t} name={t} />
            ))}
          </div>
          {["h-[107px] gap-1", "h-[103px] gap-[3px]", "gap-[3px]"].map((size, i) => (
            <div key={i} className={"flex flex-col items-center " + size}>
              <PanelRadio value={i + 1} selected={panel} onSelect={setPanel} />
              <ToolButton name="buySell" plain />
              <ToolButton name="levels" />
              <ToolButton name="curves" />
            </div>
          ))}
        </aside>
      </div>

      <footer className="flex h-[25px] items-center pr-[14px] pl-5 text-[13px]">
        <span>PharmaMar (PHM.MC)</span>
        <span className="mr-[37px] ml-auto text-[#1a00ff]">/Users/mserra/Library/CloudStorage/Dropbox/WorkDB/DatosBolsa/Configs/Config.DEFAULT.xml</span>
        <button type="button" className="h-[19px] w-[67px] border border-[#888] bg-[#f20c00] pl-1 text-left text-xs leading-4 font-medium text-white">
          OFF
        </button>
      </footer>
    </div>
  );
};
export default App;
